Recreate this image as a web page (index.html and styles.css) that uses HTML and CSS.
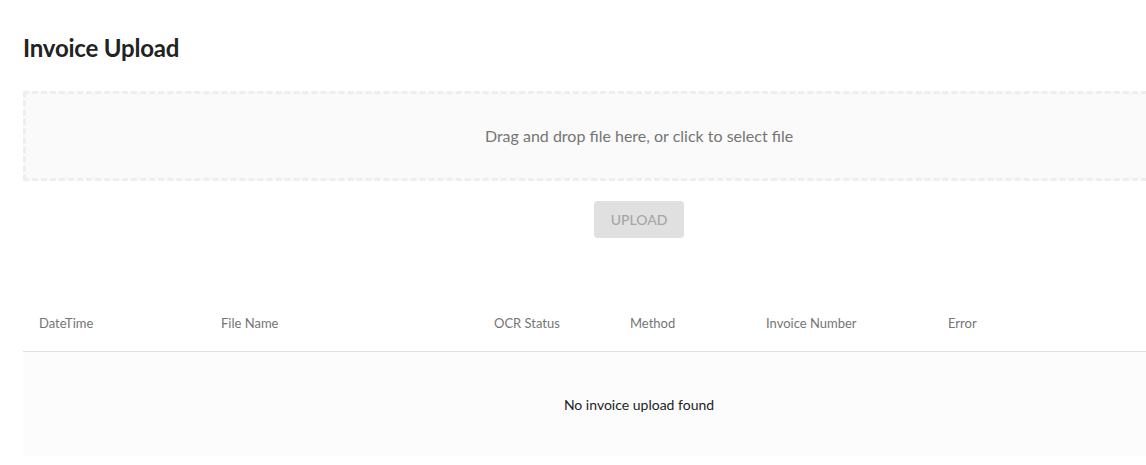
FILE: index.html
```html
<!DOCTYPE html>
<html lang="en">

<head>
    <meta charset="UTF-8">
    <meta name="viewport" content="width=device-width, initial-scale=1.0">
    <title>Invoice Upload</title>
    <link rel="stylesheet" href="styles.css">
</head>

<body>
    <div class="wrapper">
        <h1>Invoice Upload</h1>
        <div class="dropzone">Drag and drop file here, or click to select file</div>
        <div class="actions">
            <button type="button" disabled>Upload</button>
        </div>
        <div class="uploads">
            <div class="row head">
                <div>DateTime</div>
                <div>File Name</div>
                <div>OCR Status</div>
                <div>Method</div>
                <div>Invoice Number</div>
                <div>Error</div>
            </div>
            <div class="empty">No invoice upload found</div>
        </div>
    </div>
</body>

</html>
```

FILE: styles.css
```css
body {
    margin: 0;
    font-family: Lato, "Open Sans", sans-serif;
    color: #222;
    overflow-x: hidden;
}

.wrapper {
    width: 1232px;
    padding: 0 23px;
}

h1 {
    font-size: 24px;
    font-weight: 700;
    margin: 0;
    padding-top: 33px;
    line-height: 30px;
    letter-spacing: -0.2px;
}

.dropzone {
    margin-top: 28px;
    height: 82px;
    padding-bottom: 2px;
    box-sizing: content-box;
    border: 3px dashed #eeeeee;
    background-color: #fafafa;
    color: #757575;
    font-size: 16px;
    display: flex;
    align-items: center;
    justify-content: center;
}

.actions {
    display: flex;
    justify-content: center;
    margin-top: 20px;
}

button {
    width: 90px;
    height: 37px;
    border: none;
    border-radius: 4px;
    background-color: #e0e0e0;
    color: #a6a6a6;
    font-family: Lato, sans-serif;
    font-size: 14px;
    font-weight: 500;
    text-transform: uppercase;
}

.uploads {
    margin-top: 59px;
}

.row {
    display: grid;
    grid-template-columns: 182px 273px 136px 136px 182px 1fr;
}

.head {
    height: 52px;
    padding-bottom: 2px;
    align-items: center;
    border-bottom: 1px solid #e0e0e0;
    font-size: 13px;
    color: #757575;
}

.head div {
    padding-left: 16px;
}

.empty {
    height: 104px;
    background-color: #fcfcfc;
    display: flex;
    align-items: center;
    justify-content: center;
    font-size: 14px;
    color: #222;
}
```
